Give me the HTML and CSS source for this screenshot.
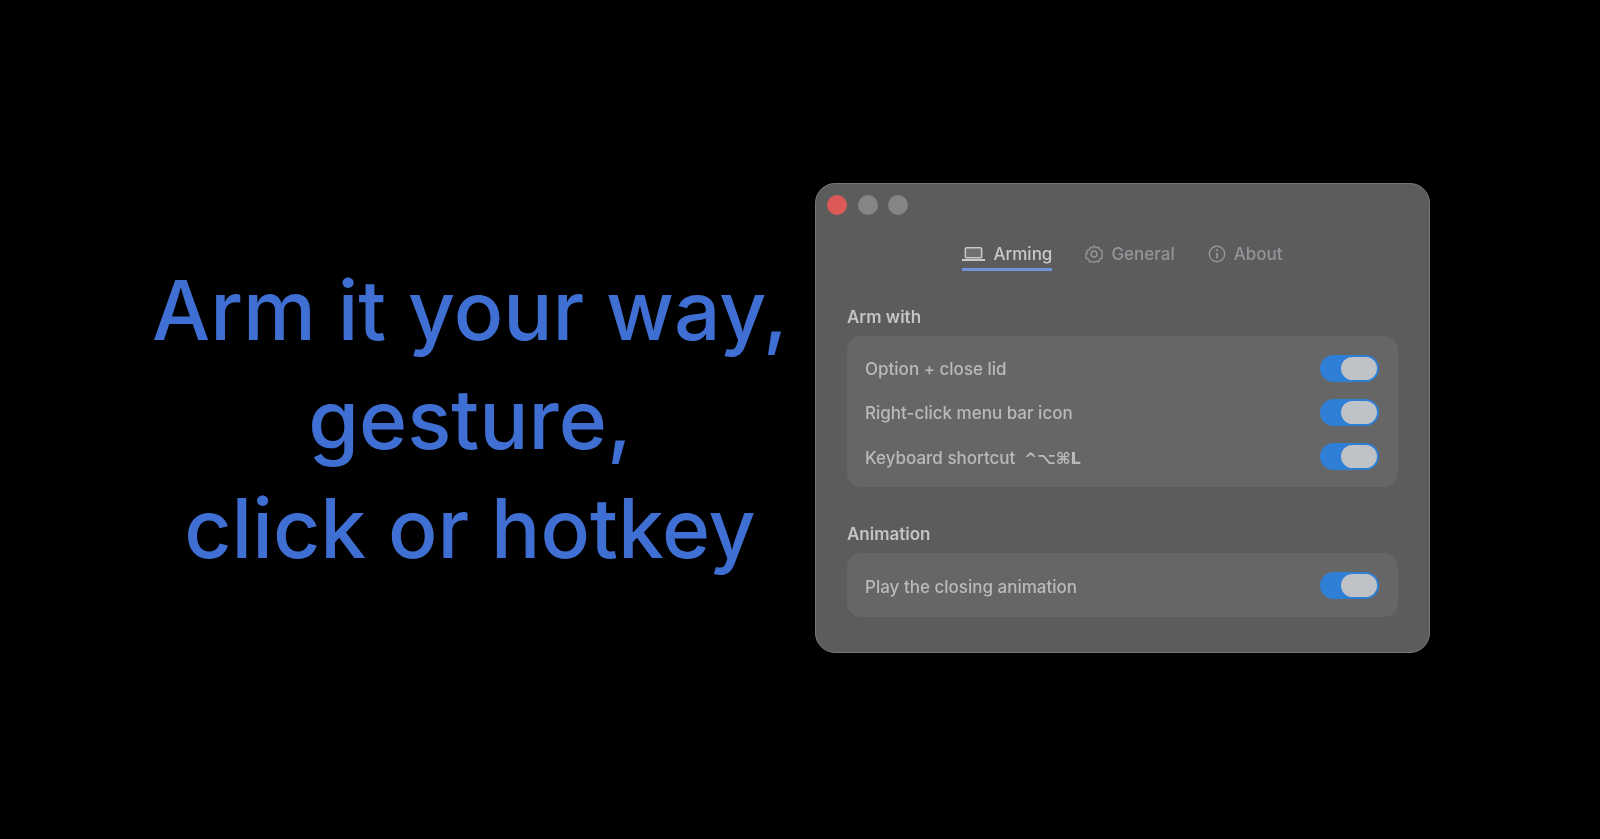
FILE: index.html
```html
<!DOCTYPE html>
<html lang="en">
<head>
    <meta charset="UTF-8">
    <meta name="viewport" content="width=device-width, initial-scale=1.0">
    <title>Arm it your way</title>
    <link rel="stylesheet" href="styles.css">
</head>
<body>

    <div class="stage">
        <h1 class="headline">Arm it your way,<br>gesture,<br>click or hotkey</h1>

        <!-- Settings window -->
        <div class="window">
            <div class="traffic">
                <span class="dot dot-close"></span>
                <span class="dot"></span>
                <span class="dot"></span>
            </div>

            <div class="tabs">
                <div class="tab tab-active">
                    <svg class="tab-icon-wide" viewBox="0 0 24 16" fill="none" stroke="currentColor" stroke-width="1.6">
                        <rect x="3.5" y="1.5" width="17" height="10.5" rx="1.2" fill="currentColor" fill-opacity="0.2"/>
                        <path d="M0.5 14.2h23" stroke-width="2.2" stroke-linecap="round"/>
                    </svg>
                    Arming
                </div>
                <div class="tab">
                    <svg class="tab-icon" viewBox="0 0 18 18" fill="none" stroke="currentColor" stroke-width="1.4">
                        <path d="M9 1l2 1.6 2.6-.3 1 2.4 2.4 1-.3 2.3L18 9l-1.3 1.9.3 2.4-2.4 1-1 2.4-2.6-.3L9 17.500l-2-1.100-2.600.300-1-2.400-2.400-1 .300-2.400L.7 9l1.600-1 -.300-2.300 2.400-1 1-2.400 2.600.300z"/>
                        <circle cx="9" cy="9" r="3"/>
                    </svg>
                    General
                </div>
                <div class="tab">
                    <svg class="tab-icon" viewBox="0 0 18 18" fill="none" stroke="currentColor" stroke-width="1.4">
                        <circle cx="9" cy="9" r="7.700"/>
                        <path d="M9 8v5.500" stroke-width="1.800"/>
                        <circle cx="9" cy="5.200" r="1.100" fill="currentColor" stroke="none"/>
                    </svg>
                    About
                </div>
            </div>

            <div class="section">
                <div class="section-title">Arm with</div>
                <div class="card">
                    <div class="row">
                        <span class="label">Option + close lid</span>
                        <span class="toggle"><span class="knob"></span></span>
                    </div>
                    <div class="row">
                        <span class="label">Right-click menu bar icon</span>
                        <span class="toggle"><span class="knob"></span></span>
                    </div>
                    <div class="row">
                        <span class="label">Keyboard shortcut <span class="keys">^⌥⌘L</span></span>
                        <span class="toggle"><span class="knob"></span></span>
                    </div>
                </div>
            </div>

            <div class="section section-second">
                <div class="section-title">Animation</div>
                <div class="card card-single">
                    <div class="row">
                        <span class="label">Play the closing animation</span>
                        <span class="toggle"><span class="knob"></span></span>
                    </div>
                </div>
            </div>
        </div>
    </div>

</body>
</html>
```

FILE: styles.css
```css
html, body {
    margin: 0;
    height: 100%;
    background: #000;
}

.stage {
    display: flex;
    align-items: center;
    height: 100vh;
    font-family: "Inter", "Liberation Sans", sans-serif;
}

.headline {
    width: 660px;
    margin: -1px 0 0 140px;
    color: #3f6fd2;
    font-size: 82px;
    font-weight: 450;
    line-height: 109px;
    text-align: center;
    white-space: nowrap;
    filter: blur(0.4px);
}

.window {
    box-sizing: border-box;
    width: 615px;
    height: 470px;
    margin: -4px 0 0 15px;
    padding-top: 11px;
    background: #5c5c5c;
    border: 1px solid #777;
    border-radius: 20px;
    filter: blur(0.7px);
}

.traffic {
    display: flex;
    gap: 10.5px;
    padding-left: 11px;
}

.dot {
    width: 20px;
    height: 20px;
    border-radius: 50%;
    background: #858585;
}

.dot-close {
    background: #db5a58;
}

.tabs {
    display: flex;
    justify-content: center;
    gap: 33px;
    margin-top: 27px;
    font-size: 17px;
    font-weight: 500;
    color: #929599;
}

.tab {
    display: flex;
    align-items: center;
    gap: 8px;
    height: 24px;
    padding-bottom: 2px;
    border-bottom: 3px solid transparent;
}

.tab-active {
    color: #c9c9c9;
    border-bottom-color: #6e95dc;
}

.tab-icon-wide {
    width: 23px;
    height: 16px;
}

.tab-icon {
    width: 18px;
    height: 18px;
}

.section {
    padding: 0 31px;
    margin-top: 36px;
}

.section-second {
    margin-top: 37px;
}

.section-title {
    height: 20px;
    line-height: 20px;
    margin-bottom: 9.5px;
    color: #c4c4c4;
    font-size: 17px;
    font-weight: 600;
}

.card {
    padding: 10px 19px 8px 18px;
    background: #666;
    border-radius: 14px;
}

.card-single {
    padding-bottom: 9px;
}

.row {
    display: flex;
    align-items: center;
    justify-content: space-between;
    height: 44.3px;
    color: #bababa;
    font-size: 17px;
    font-weight: 500;
}

.label {
    margin-top: 2px;
}

.keys {
    margin-left: 4px;
    font-family: "DejaVu Sans", sans-serif;
    font-size: 16px;
    font-weight: 600;
}

.toggle {
    display: flex;
    justify-content: flex-end;
    align-items: center;
    box-sizing: border-box;
    width: 59px;
    height: 27px;
    padding-right: 2px;
    background: #2f7fd6;
    border-radius: 14px;
}

.knob {
    width: 36px;
    height: 23px;
    background: #bfc3c8;
    border-radius: 12px;
}
```
